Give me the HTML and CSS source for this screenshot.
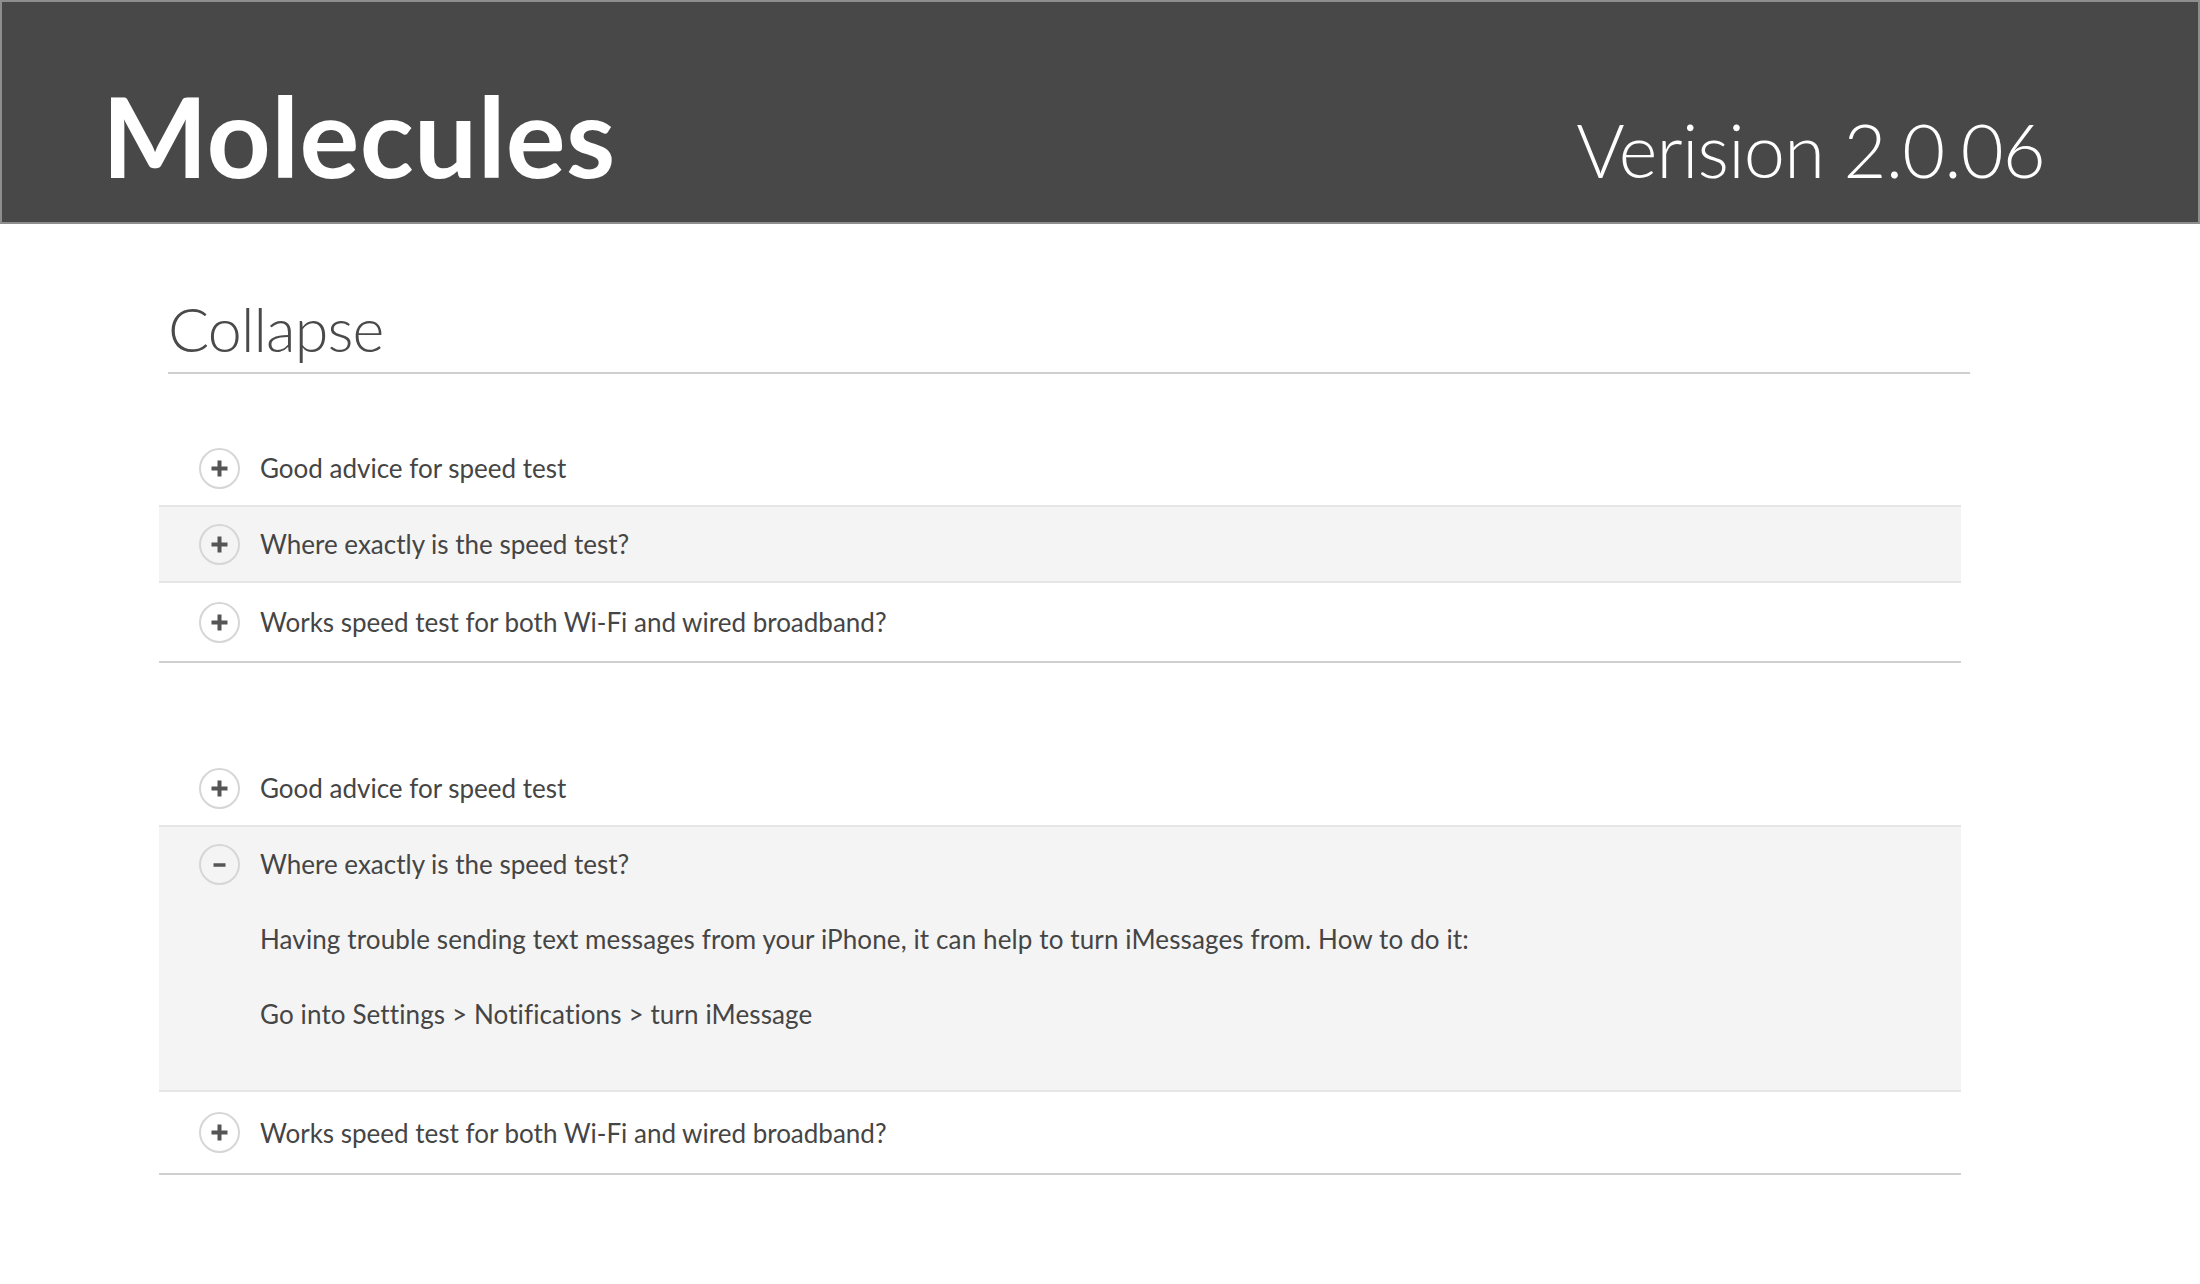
FILE: index.html
```html
<!DOCTYPE html>
<html lang="en">
<head>
<meta charset="utf-8">
<title>Molecules</title>
<link rel="stylesheet" href="styles.css">
</head>
<body>
<header class="topbar">
  <h1 class="brand">Molecules</h1>
  <div class="version">Verision 2.0.06</div>
</header>
<main class="content">
  <h2 class="section-title">Collapse</h2>

  <div class="accordion group-first">
    <div class="acc-item">
      <div class="acc-head">
        <span class="acc-icon"><svg viewBox="0 0 41 41" width="41" height="41"><circle cx="20.5" cy="20.5" r="19.5" class="ring"/><path d="M12.5 20.5h16M20.5 12.5v16" class="glyph-plus"/></svg></span>
        <span class="acc-label">Good advice for speed test</span>
      </div>
    </div>
    <div class="acc-item is-shaded">
      <div class="acc-head">
        <span class="acc-icon"><svg viewBox="0 0 41 41" width="41" height="41"><circle cx="20.5" cy="20.5" r="19.5" class="ring"/><path d="M12.5 20.5h16M20.5 12.5v16" class="glyph-plus"/></svg></span>
        <span class="acc-label">Where exactly is the speed test?</span>
      </div>
    </div>
    <div class="acc-item is-last">
      <div class="acc-head">
        <span class="acc-icon"><svg viewBox="0 0 41 41" width="41" height="41"><circle cx="20.5" cy="20.5" r="19.5" class="ring"/><path d="M12.5 20.5h16M20.5 12.5v16" class="glyph-plus"/></svg></span>
        <span class="acc-label">Works speed test for both Wi-Fi and wired broadband?</span>
      </div>
    </div>
  </div>

  <div class="accordion group-second">
    <div class="acc-item">
      <div class="acc-head">
        <span class="acc-icon"><svg viewBox="0 0 41 41" width="41" height="41"><circle cx="20.5" cy="20.5" r="19.5" class="ring"/><path d="M12.5 20.5h16M20.5 12.5v16" class="glyph-plus"/></svg></span>
        <span class="acc-label">Good advice for speed test</span>
      </div>
    </div>
    <div class="acc-item is-shaded is-open">
      <div class="acc-head">
        <span class="acc-icon"><svg viewBox="0 0 41 41" width="41" height="41"><circle cx="20.5" cy="20.5" r="19.5" class="ring"/><path d="M14.5 21h12" class="glyph-minus"/></svg></span>
        <span class="acc-label">Where exactly is the speed test?</span>
      </div>
      <div class="acc-body">
        <p>Having trouble sending text messages from your iPhone, it can help to turn iMessages from. How to do it:</p>
        <p>Go into Settings &gt; Notifications &gt; turn iMessage</p>
      </div>
    </div>
    <div class="acc-item is-last">
      <div class="acc-head">
        <span class="acc-icon"><svg viewBox="0 0 41 41" width="41" height="41"><circle cx="20.5" cy="20.5" r="19.5" class="ring"/><path d="M12.5 20.5h16M20.5 12.5v16" class="glyph-plus"/></svg></span>
        <span class="acc-label">Works speed test for both Wi-Fi and wired broadband?</span>
      </div>
    </div>
  </div>
</main>
</body>
</html>
```
FILE: styles.css
```css
* { box-sizing: border-box; }

html, body {
  margin: 0;
  padding: 0;
  background: #ffffff;
}

body {
  font-family: Lato, "Open Sans", "DejaVu Sans", sans-serif;
  color: #454545;
}

.topbar {
  height: 224px;
  background: #484848;
  border: 2px solid #8e8e8e;
  display: flex;
  justify-content: space-between;
  align-items: baseline;
  padding: 77px 153px 0 100px;
}

.brand {
  margin: 0;
  font-size: 112px;
  line-height: 1;
  font-weight: 700;
  letter-spacing: 0.4px;
  color: #ffffff;
}

.version {
  font-size: 74px;
  line-height: 1;
  font-weight: 300;
  letter-spacing: -0.8px;
  color: #ffffff;
}

.content {
  padding: 0 0 0 159px;
}

.section-title {
  margin: 74px 0 0 9px;
  width: 1802px;
  font-size: 61px;
  line-height: 1;
  font-weight: 300;
  letter-spacing: -0.9px;
  color: #4a4a4a;
  padding-bottom: 13px;
  border-bottom: 2px solid #cfcfcf;
}

.accordion {
  width: 1802px;
  border-bottom: 2px solid #d0d0d0;
}

.group-first { margin-top: 57px; }
.group-second { margin-top: 88px; }

.acc-item {
  border-bottom: 2px solid #e6e6e6;
}

.acc-item.is-last {
  border-bottom: 0;
}

.acc-item.is-shaded {
  background: #f4f4f4;
}

.acc-head {
  height: 74px;
  display: flex;
  align-items: center;
  padding-left: 40px;
}

.group-first .acc-item.is-last .acc-head {
  height: 78px;
}

.group-second .acc-item.is-last .acc-head {
  height: 81px;
}

.acc-icon {
  width: 41px;
  height: 41px;
  flex: none;
  display: block;
}

.acc-icon svg { display: block; }

.ring {
  fill: none;
  stroke: #d6d6d6;
  stroke-width: 2;
}

.glyph-plus {
  stroke: #555555;
  stroke-width: 4;
  fill: none;
}

.glyph-minus {
  stroke: #555555;
  stroke-width: 3.5;
  fill: none;
}

.acc-label {
  margin-left: 20px;
  font-size: 26px;
  line-height: 36px;
  color: #454545;
}

.acc-body {
  padding: 20px 0 58px 101px;
}

.acc-body p {
  margin: 0;
  font-size: 26px;
  line-height: 36px;
  letter-spacing: 0.12px;
  color: #454545;
}

.acc-body p + p {
  margin-top: 39px;
}
```
